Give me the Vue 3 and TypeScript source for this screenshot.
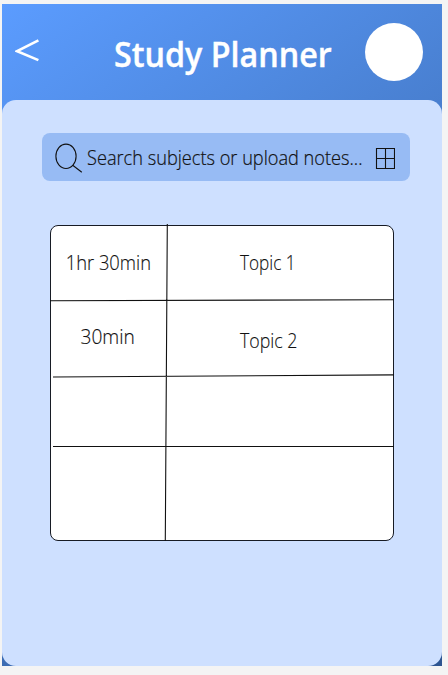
<script setup lang="ts">
interface Slot {
  time: string
  topic: string
}

const slots: Slot[] = [
  { time: '1hr 30min', topic: 'Topic 1' },
  { time: '30min', topic: 'Topic 2' },
  { time: '', topic: '' },
  { time: '', topic: '' },
]
</script>

<template>
  <main class="screen">
    <header class="header">
      <svg class="back" viewBox="0 0 26 26" aria-label="Back">
        <path d="M23.4 3.3 2.2 14.2 23.4 23.1" />
      </svg>
      <h1 class="title"><span>Study Planner</span></h1>
      <div class="avatar"></div>
    </header>
    <section class="sheet">
      <div class="search">
        <svg class="lens" viewBox="0 0 28 30">
          <ellipse cx="11" cy="13.3" rx="10.1" ry="12.2" />
          <path d="M17.7 22.2 26.8 29.2" />
        </svg>
        <div class="query"><span>Search subjects or upload notes...</span></div>
        <svg class="grid-icon" viewBox="0 0 20 22">
          <path d="M1.5 1.5H19.5V21.5H1.5ZM10.5 1.5V21.5M1.5 11.5H19.5" />
        </svg>
      </div>
      <div class="planner">
        <svg class="rules" viewBox="0 0 344 318">
          <path d="M117.3 0 115.3 317M0 76.8 344 75.7M3 153 344 150.9M3 222.5H344" />
        </svg>
        <div v-for="(slot, i) in slots" :key="i" class="row">
          <div class="time"><span>{{ slot.time }}</span></div>
          <div class="topic"><span>{{ slot.topic }}</span></div>
        </div>
      </div>
    </section>
  </main>
</template>

<style>
body {
  background: #f4f4f4;
}
</style>

<style scoped>
.screen {
  box-sizing: border-box;
  width: 439.5px;
  height: 662px;
  margin: 4px 0 0 2px;
  display: flow-root;
  background: linear-gradient(145deg, #5b9cff 0%, #4b83d6 36%, #2d5591 100%);
  font-family: 'Open Sans', 'Noto Sans', sans-serif;
  color: #111;
}
.header {
  height: 96px;
  display: flex;
  align-items: center;
}
svg {
  display: block;
  flex: none;
  fill: none;
  stroke: #111;
  stroke-width: 1.1;
}
.back {
  width: 26px;
  height: 26px;
  margin: -4px 0 0 12.5px;
  stroke: #fff;
  stroke-width: 2.6;
}
.title {
  width: 220px;
  margin: 3px 0 0 73px;
  font-size: 33.5px;
  line-height: 44px;
  font-weight: 600;
  color: #fff;
  white-space: nowrap;
  -webkit-text-stroke: 0.4px #fff;
}
.title span,
.query span,
.row span {
  display: inline-block;
  transform-origin: left center;
  white-space: nowrap;
}
.title span {
  transform: scaleX(0.963);
}
.avatar {
  width: 58px;
  height: 58px;
  margin: 0 0 0 31.5px;
  border-radius: 50%;
  background: #fff;
}
.sheet {
  height: 566px;
  border-radius: 14px;
  background: #cee0ff;
  display: flow-root;
}
.search {
  width: 368.5px;
  height: 48px;
  margin: 32.5px 0 0 39.5px;
  border-radius: 8px;
  background: #97bbf4;
  display: flex;
  align-items: center;
}
.lens {
  width: 28px;
  height: 30px;
  margin: 2px 0 0 13px;
}
.query {
  width: 287.5px;
  margin: 3px 0 0 4.5px;
  font-size: 19.5px;
  line-height: 28px;
  font-weight: 300;
  -webkit-text-stroke: 0.2px #111;
}
.query span {
  transform: scaleX(0.932);
}
.grid-icon {
  width: 20px;
  height: 22px;
  margin-top: 3px;
}
.planner {
  position: relative;
  box-sizing: border-box;
  width: 344px;
  height: 316.5px;
  margin: 44px 0 0 48.4px;
  border: 1px solid #171b24;
  border-radius: 8px;
  background: #fff;
  display: grid;
  grid-template-rows: 75px 76px 70px 1fr;
}
.rules {
  position: absolute;
  left: -1px;
  top: -2px;
  width: 344px;
  height: 318px;
}
.row {
  display: grid;
  grid-template-columns: 116px 1fr;
  align-items: center;
  font-size: 19.5px;
  line-height: 26px;
  font-weight: 300;
  -webkit-text-stroke: 0.15px #111;
}
.time {
  padding: 0 3px 1px 0;
  text-align: center;
}
.time span {
  transform: scaleX(0.94);
  transform-origin: center;
}
.topic {
  padding: 0 0 1px 73px;
}
.topic span {
  transform: scaleX(0.88);
}
.row:nth-of-type(2) .time {
  padding-bottom: 4px;
}
.row:nth-of-type(2) .time span {
  transform: scaleX(0.98);
}
.row:nth-of-type(2) .topic {
  padding: 4px 0 0 73px;
}
.row:nth-of-type(2) .topic span {
  transform: scaleX(0.91);
}
</style>
